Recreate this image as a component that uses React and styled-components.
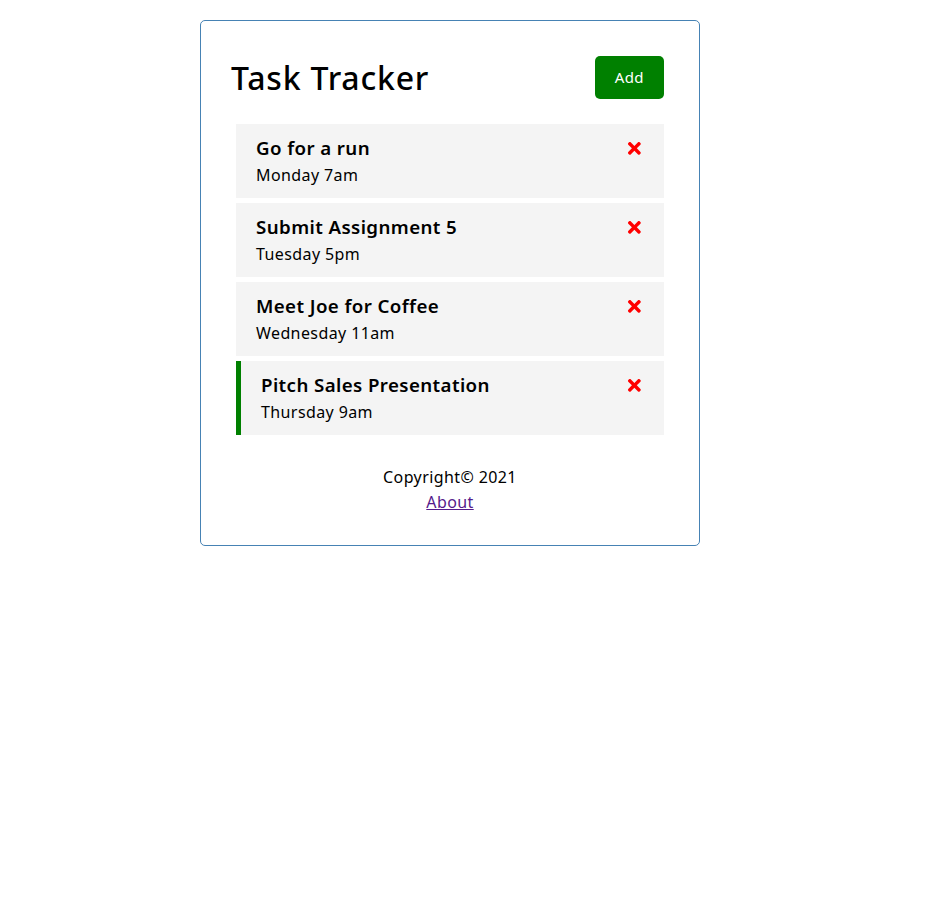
import React from "react";
import styled, { createGlobalStyle } from "styled-components";
import { FaTimes } from "react-icons/fa";

const tasks = [
  { id: 1, text: "Go for a run", day: "Monday 7am", reminder: false },
  { id: 2, text: "Submit Assignment 5", day: "Tuesday 5pm", reminder: false },
  { id: 3, text: "Meet Joe for Coffee", day: "Wednesday 11am", reminder: false },
  { id: 4, text: "Pitch Sales Presentation", day: "Thursday 9am", reminder: true },
];

const App = () => {
  return (
    <>
      <GlobalStyle />
      <Page>
        <Container>
          <Header>
            <Title>Task Tracker</Title>
            <AddBtn>Add</AddBtn>
          </Header>
          {tasks.map((task) => (
            <Task key={task.id} $reminder={task.reminder}>
              <TaskTitle>
                {task.text}
                <FaTimes style={{ color: "red", cursor: "pointer" }} />
              </TaskTitle>
              <TaskDay>{task.day}</TaskDay>
            </Task>
          ))}
          <Footer>
            <p>Copyright© 2021</p>
            <a href="#about">About</a>
          </Footer>
        </Container>
      </Page>
    </>
  );
};

const GlobalStyle = createGlobalStyle`
  * {
    box-sizing: border-box;
    margin: 0;
    padding: 0;
  }
  body {
    font-family: "Noto Sans", sans-serif;
    background: #fff;
    line-height: 1.5;
    letter-spacing: 0.4px;
  }
`;

const Page = styled.div`
  max-width: 900px;
  overflow: hidden;
`;

const Container = styled.div`
  max-width: 500px;
  margin: 20px auto;
  min-height: 300px;
  border: 1px solid steelblue;
  padding: 30px;
  border-radius: 5px;
`;

const Header = styled.header`
  display: flex;
  justify-content: space-between;
  align-items: center;
  margin-bottom: 20px;
`;

const Title = styled.h1`
  font-size: 32px;
  font-weight: 500;
  line-height: 1.5;
  letter-spacing: 0.8px;
`;

const AddBtn = styled.button`
  background: green;
  color: #fff;
  border: none;
  padding: 10px 20px;
  margin: 5px;
  border-radius: 5px;
  font-size: 15px;
  line-height: 23px;
  font-family: inherit;
  letter-spacing: 0.4px;
  cursor: pointer;
`;

const Task = styled.div`
  background: #f4f4f4;
  margin: 5px;
  padding: 10px 20px;
  cursor: pointer;
  border-left: ${(p) => (p.$reminder ? "5px solid green" : "none")};
`;

const TaskTitle = styled.h3`
  display: flex;
  align-items: center;
  justify-content: space-between;
  font-size: 18.72px;
  font-weight: 600;
  line-height: 28px;
  padding-bottom: 1px;
`;

const TaskDay = styled.p`
  font-size: 16px;
  line-height: 25px;
`;

const Footer = styled.footer`
  margin-top: 30px;
  text-align: center;
  font-size: 16px;
  line-height: 25px;

  a {
    color: #551a8b;
  }
`;

export default App;
